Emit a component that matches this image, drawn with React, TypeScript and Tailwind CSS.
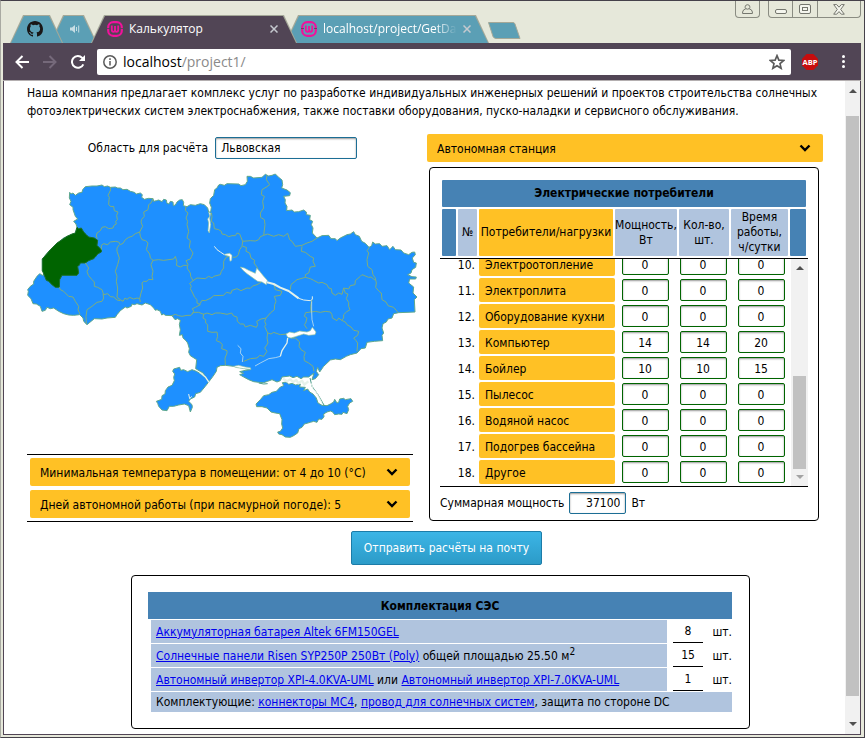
import { useState } from "react";
import type { ReactNode } from "react";

const REGION_BORDERS = [
  "270,188 271,195 268,202 263,212 267,218 266,225 265,240 272,246 280,245 282,258 293,262 289,272 291,285 286,290 288,298 280,303 278,310 265,312 255,306 245,308 240,318 230,325 228,334 231,342",
  "398,222 392,235 385,240 383,255 370,262 372,275 364,284 362,292 367,305 358,322 345,327 335,335 325,338 315,345 308,356 300,360 295,352 285,350 270,352 262,360 250,357 243,362 243,375",
  "297,360 290,370 290,380 297,400 292,420 285,440 290,455 288,470 292,490 290,518 300,525 308,530 314,520 320,524 328,518 340,523 350,520 358,522 360,532",
  "358,322 360,335 365,345 376,348 383,355 378,375 388,388 390,400 398,407 415,405 430,407 460,403 465,395 470,412 468,422 480,427 490,422 500,422",
  "398,407 392,420 398,440 395,455 398,465 385,464 380,470 370,470 365,475 367,490 362,505 358,522",
  "497,246 495,258 503,265 497,280 502,290 500,300 505,320 500,340 510,348 507,368 518,385 514,395 510,403 497,408 503,420 500,430 510,445 511,455 518,468",
  "195,415 205,430 200,440 204,452 215,465 222,472 222,485 232,488 245,495 250,510 262,507 270,516 280,517 290,526 300,528",
  "248,508 250,520 245,530 230,533 215,545 200,555 197,575 198,597",
  "117,488 120,495 130,500 145,515 158,517 165,530 175,545 173,556 179,568",
  "518,468 530,460 555,462 565,455 575,460 580,455 600,450 603,440 610,430 610,410 617,398 627,394",
  "518,468 508,476 513,485 510,492 517,505 523,518 530,525 530,535 540,540 525,548 516,552 520,560 515,568",
  "537,540 545,527 555,528 572,520 580,513 610,512 618,503 632,506 635,497 650,492 662,498 680,490 690,491 697,484 710,480 722,473",
  "455,573 465,569 475,573 485,575 500,572 512,572 520,563 535,563 550,569 560,565 575,570 585,565 600,565 620,569 634,565 640,574 650,577 651,590 660,598 670,598 675,607 690,602 708,608 712,600 709,590 722,583 737,580",
  "550,567 548,580 556,585 556,595 562,600 562,620 575,623 590,622 592,635 588,648 600,653 606,660 604,672 620,678 620,685 614,700 615,720",
  "573,264 575,275 573,290 580,295 582,312 595,315 603,320 605,328 615,330 625,336 635,333 645,333 650,325 658,328 667,350 690,348 705,349 715,345 720,336 730,332",
  "740,152 738,165 748,180 740,186 725,195 723,210 732,215 727,230 730,250 720,265 721,278 732,285 734,300 730,332",
  "730,332 742,328 760,335 775,330 790,335 802,326 808,345 815,350 825,365 845,362 860,355 875,350 890,340",
  "845,365 843,380 855,383 870,395 880,400 878,410 885,425 870,427 865,445 855,450 855,458 830,465 812,480 810,495",
  "667,350 665,365 658,375 654,390 648,397 638,398",
  "667,365 678,368 677,380 688,385 692,400 703,407 701,415 712,430 714,445",
  "855,458 870,462 880,467 895,475 905,473 920,480 925,490 933,492 935,505 945,512 955,505 965,509 970,490 985,493 990,483 1004,480 1005,468 1020,455 1025,450 1045,458 1052,457 1065,467",
  "1047,368 1040,378 1045,385 1040,405 1042,425 1055,435 1058,450 1065,460 1068,475 1066,488 1076,500 1083,505 1085,525 1097,532 1103,543 1120,548 1133,563",
  "970,490 975,505 983,508 978,522 985,533 985,545 989,555 978,562 970,570 970,580 964,587 975,592 980,600 992,607 1000,617 1015,620 1012,632 1000,640 1007,648 1012,655 1010,680",
  "872,562 885,560 900,563 915,560 930,562 935,570 936,580 950,588 955,580 964,587",
  "760,475 765,495 785,500 780,512 762,515 767,530 763,540 762,555 750,565 737,580 733,590 737,600 733,605 742,625",
  "742,625 740,640 743,655 733,670 740,680 730,695 718,692 710,700 690,702 670,710",
  "742,625 752,628 760,623 780,630 800,628",
  "875,525 871,545 872,562 856,564 852,575 860,580 856,595 852,600 860,612",
  "812,640 825,640 838,652 836,665 842,675 855,683 851,695 852,708 865,715 878,725 881,740",
];

const MAINLAND =
  "148,203 152,208 158,205 165,212 175,205 185,203 187,195 195,186 215,184 230,184 245,181 252,186 262,184 270,188 285,187 292,190 300,190 308,195 320,194 330,200 342,203 348,208 360,205 366,210 364,218 372,224 385,221 398,222 400,230 408,228 415,226 425,231 430,224 438,226 440,236 446,238 450,230 458,232 459,243 465,241 470,232 478,226 486,225 490,233 489,243 500,246 510,240 525,242 540,237 552,240 562,250 565,262 571,262 573,248 568,235 570,222 580,212 583,195 590,190 595,181 600,179 612,182 620,177 655,178 662,183 675,180 681,170 680,155 690,155 700,160 725,158 735,149 745,154 755,152 765,148 775,158 785,166 787,180 784,190 800,196 810,204 808,213 790,215 795,225 794,235 800,245 799,258 815,256 822,262 835,261 850,256 858,262 858,270 870,272 868,285 877,290 873,300 878,310 876,325 890,340 905,333 925,332 932,342 945,342 950,348 960,340 980,330 990,328 1000,321 1005,330 1017,335 1024,350 1035,356 1046,368 1054,363 1057,352 1065,358 1078,357 1085,365 1100,363 1108,375 1118,365 1125,375 1142,376 1150,385 1165,390 1175,383 1183,382 1185,390 1176,400 1180,413 1188,415 1186,428 1175,435 1172,445 1162,450 1175,456 1188,457 1186,463 1168,463 1165,475 1180,487 1178,505 1190,517 1182,525 1184,562 1135,564 1120,567 1115,580 1103,583 1098,592 1088,597 1085,610 1090,625 1085,632 1087,648 1062,650 1040,653 1035,670 1022,672 1010,685 990,690 978,695 960,705 945,703 930,706 910,725 898,742 892,728 888,740 895,750 885,762 875,765 881,745 865,757 850,757 842,762 830,755 818,759 808,754 785,757 780,768 770,772 755,765 742,770 730,774 715,773 700,771 685,765 670,757 658,750 670,746 658,741 675,737 690,735 640,725 632,724 615,722 600,723 590,728 588,740 578,755 565,772 555,785 540,803 526,807 523,817 510,823 505,830 515,840 516,848 510,862 505,843 492,838 475,841 460,845 447,845 440,858 425,856 415,845 412,836 408,830 424,824 425,813 434,808 435,798 443,787 455,782 462,768 460,758 463,748 457,740 460,733 478,728 481,737 490,735 502,741 515,735 528,740 545,750 560,763 564,770 548,745 526,732 529,705 510,693 505,683 507,672 502,655 497,648 488,640 486,630 477,632 480,615 477,600 480,587 472,582 464,585 455,573 435,572 430,568 424,571 420,560 410,555 405,557 400,550 390,540 375,535 365,541 350,537 342,540 335,538 333,545 320,550 315,547 300,558 290,570 285,578 260,580 245,583 222,582 200,600 190,590 188,580 178,570 160,572 145,571 130,567 115,560 100,550 90,552 80,548 75,557 65,560 60,545 48,538 38,537 32,522 22,512 24,500 22,495 30,485 40,478 40,470 50,455 58,447 68,453 72,440 66,438 66,403 90,375 130,340 165,325 170,308 167,298 160,290 172,283 165,275 158,255 158,248 148,240 152,230 147,220";

const CRIMEA =
  "790,783 780,787 768,800 755,803 745,810 730,813 720,825 707,838 709,846 725,846 740,850 752,862 765,865 778,867 785,885 784,898 787,910 780,920 772,922 775,928 785,930 795,937 810,938 820,933 832,925 836,912 845,908 852,898 870,893 880,890 890,893 895,883 905,884 911,876 910,868 920,862 930,859 937,862 943,870 955,868 965,869 968,863 980,867 985,855 982,845 988,835 997,830 992,822 975,825 970,821 958,823 955,833 950,835 943,824 940,832 930,838 920,843 905,842 893,835 888,820 878,808 868,802 862,793 850,798 855,788 838,787 840,778 826,781 815,776 805,779 798,772 786,774";

function UkraineMap() {
  return (
    <svg viewBox="20 139 1176 804" className="mt-3 w-[calc(100%+6px)]" role="img" aria-label="Карта областей">
      <g fill="#1e90ff" stroke="#5fa88c" strokeWidth="3" strokeLinejoin="round">
        <polygon points={MAINLAND} />
        <polygon points={CRIMEA} />
        <polygon
          fill="#006400"
          stroke="#1d6f2c"
          points="170,308 175,312 183,310 190,322 198,330 205,337 222,340 232,347 230,362 243,375 243,382 232,388 225,397 220,402 205,408 195,415 180,415 177,422 172,425 175,445 170,452 125,452 118,465 117,488 105,488 95,480 85,470 78,467 70,447 66,438 66,403 90,375 110,355 140,335 155,328 165,325"
        />
      </g>
      <g fill="none" stroke="#7fae7c" strokeWidth="3" strokeLinejoin="round">
        {REGION_BORDERS.map((points) => (
          <polyline key={points} points={points} />
        ))}
        <polyline points="869,760 875,785 893,810 912,843" stroke="#4a9a8a" />
        <polyline points="715,775 730,778 742,777" stroke="#4a9a8a" />
      </g>
      <g fill="#fff" stroke="#8fc3a0" strokeWidth="2" strokeLinejoin="round">
        <polygon points="565,262 571,266 568,280 571,300 567,325 563,318 565,295 562,283 568,275" />
        <polygon points="612,389 628,386 635,392 634,407 629,410 627,395 614,392" />
        <polygon points="660,427 672,430 685,437 705,446 709,431 718,440 730,455 741,467 738,480 725,472 712,470 695,458 680,447 668,437" />
        <polygon points="797,628 808,622 822,625 838,619 860,622 870,618 876,608 887,622 884,630 865,632 850,628 825,636 812,640 802,638" />
        <polygon points="640,725 655,722 675,727 690,729 692,734 670,732 645,728" />
      </g>
      <g fill="none" stroke="#e6f2ea" strokeWidth="4" strokeLinejoin="round">
        <polyline points="740,473 760,478 780,489 805,499 835,521" strokeWidth="6" />
        <polyline points="835,521 850,526 870,528 876,524 876,515" strokeWidth="3" />
        <polyline points="582,365 590,375 600,382 612,390" strokeWidth="3" />
        <polyline points="874,530 874,560 875,585 880,605" strokeWidth="2" />
        <polyline points="802,640 800,655 785,678 780,695" />
        <polyline points="780,695 765,699 745,702 720,715 704,724" strokeWidth="2" />
        <polyline points="652,662 662,672 660,685 668,695 666,712" strokeWidth="2" />
        <polyline points="538,743 556,758 566,773" />
        <polyline points="788,762 800,770 810,764 818,772 828,766 834,776 845,768 852,780 864,770" strokeWidth="7" />
        <polyline points="872,775 878,792 890,806 905,835" strokeWidth="3" />
        <polyline points="505,808 508,822 514,815" strokeWidth="3" />
      </g>
    </svg>
  );
}

function Chevron() {
  return (
    <svg viewBox="0 0 12 8" className="pointer-events-none absolute right-3 h-2 w-3" fill="none" stroke="#000" strokeWidth="2.4">
      <path d="M1.5 1.5 6 6l4.5-4.5" />
    </svg>
  );
}

function Dropdown({ label, value }: { label: string; value: string }) {
  return (
    <label className="relative flex items-center">
      <select aria-label={label} className="h-7 w-full appearance-none rounded-xs bg-[#ffc125] pt-px pr-8 pl-[10px] text-black outline-none">
        <option>{value}</option>
      </select>
      <Chevron />
    </label>
  );
}

function TabShape({ fill }: { fill: string }) {
  return (
    <svg viewBox="0 0 100 28" preserveAspectRatio="none" className="absolute inset-0 -z-10 h-full w-full" aria-hidden="true">
      <rect width="100" height="28" fill={fill} />
    </svg>
  );
}

function Tab({ className, active, children }: { className: string; active?: boolean; children: ReactNode }) {
  return (
    <div
      className={`relative isolate h-7 bg-[#a4a898] [clip-path:polygon(13px_0,calc(100%-13px)_0,100%_100%,0_100%)] ${className}`}
    >
      <div className="absolute inset-x-px top-px bottom-0 -z-10 [clip-path:polygon(13px_0,calc(100%-13px)_0,100%_100%,0_100%)]">
        <TabShape fill={active ? "#514555" : "#5b9fb5"} />
      </div>
      <div className="flex h-full items-center">{children}</div>
    </div>
  );
}

function WampIcon() {
  return (
    <svg viewBox="0 0 16 16" className="h-4 w-4 shrink-0" fill="none" stroke="#f0129b" aria-hidden="true">
      <rect x="1.2" y="1.2" width="13.6" height="13.6" rx="5" strokeWidth="2.2" />
      <path d="M0 7.500h3M13 7.500h3" stroke="#514555" strokeWidth=".8" />
      <path d="M4.8 4.500v4.300q0 2 1.600 2T8 8.800V5m0 3.800q0 2 1.600 2t1.600-2V4.500" strokeWidth="1.800" />
    </svg>
  );
}

function CloseIcon() {
  return (
    <svg viewBox="0 0 8 8" className="h-2 w-2" stroke="#c5c9cf" strokeWidth="1.5">
      <path d="m.5.5 7 7m0-7-7 7" />
    </svg>
  );
}

function TitleBar() {
  return (
    <div className="flex h-[42px] items-start justify-between">
      <div className="flex items-end pt-[14px] pl-[7px] font-['Open_Sans','Noto_Sans',sans-serif] text-[12px] text-white">
        <Tab className="z-10 w-[53px] pl-[17px]">
          <svg viewBox="0 0 16 16" className="h-4 w-4" fill="#191717" aria-label="GitHub">
            <path d="M8 0C3.58 0 0 3.58 0 8c0 3.54 2.29 6.53 5.47 7.59.4.07.55-.17.55-.38 0-.19-.01-.82-.01-1.49-2.01.37-2.53-.49-2.69-.94-.09-.23-.48-.94-.82-1.13-.28-.15-.68-.52-.01-.53.63-.01 1.08.58 1.23.82.72 1.21 1.87.87 2.33.66.07-.52.28-.87.51-1.07-1.78-.2-3.64-.89-3.64-3.95 0-.87.31-1.59.82-2.15-.08-.2-.36-1.02.08-2.12 0 0 .67-.21 2.2.82a7.6 7.6 0 0 1 4 0c1.53-1.04 2.2-.82 2.2-.82.44 1.1.16 1.92.08 2.12.51.56.82 1.27.82 2.15 0 3.07-1.87 3.75-3.65 3.95.29.25.54.73.54 1.48 0 1.07-.01 1.93-.01 2.2 0 .21.15.46.55.38A8.01 8.01 0 0 0 16 8c0-4.42-3.58-8-8-8" />
          </svg>
        </Tab>
        <Tab className="-ml-[13px] w-[47px] pl-5">
          <svg viewBox="0 0 10 10" className="h-[10px] w-[10px]" fill="#c7dde4" stroke="#c7dde4" aria-label="Звук">
            <path d="M0 3.500h2L5 1v8L2 6.500H0z" stroke="none" />
            <path d="M6.500 3v4M8.700 1.500v7" fill="none" />
          </svg>
        </Tab>
        <Tab active className="z-20 -ml-[6px] w-[206px] pl-4">
          <WampIcon />
          <span className="ml-[6px] flex-1">Калькулятор</span>
          <button aria-label="Закрыть вкладку" className="mr-[19px]"><CloseIcon /></button>
        </Tab>
        <Tab className="-ml-3 w-[204px] pl-4">
          <WampIcon />
          <span className="ml-[6px] w-[134px] whitespace-nowrap [mask-image:linear-gradient(to_right,#000_84%,transparent)]">
            localhost/project/GetDat
          </span>
          <button aria-label="Закрыть вкладку" className="ml-[6px]"><CloseIcon /></button>
        </Tab>
        <button aria-label="Новая вкладка" className="mb-1 -ml-[2px]">
          <svg viewBox="0 0 34 17" className="h-[17px] w-[34px]" fill="#5b9fb5" stroke="#a4a898">
            <path d="M1.500 .5H26q1.500 0 2 1.500l5 14.500H9q-2 0-3-2z" />
          </svg>
        </button>
      </div>
      <div className="flex h-[17px] gap-2 text-[#74766e]">
        <button aria-label="Профиль" className="flex w-[25px] items-center justify-center rounded-b-sm border border-t-0 border-[#8a8c82]">
          <svg viewBox="0 0 11 11" className="h-[11px] w-[11px]" fill="none" stroke="currentColor">
            <path d="M5.500.7a2.300 2.300 0 0 1 1.600 4q3 .8 3.300 3.300v1.500H.6V8q.3-2.500 3.300-3.300A2.300 2.300 0 0 1 5.500.7zM3.900 4.700q1.600 1 3.200 0" />
          </svg>
        </button>
        <div className="flex divide-x divide-[#8a8c82] rounded-b-sm border border-t-0 border-[#8a8c82]">
          <button aria-label="Свернуть" className="flex w-6 items-end justify-center pb-[3px]">
            <span className="h-[5px] w-3 rounded-xs border border-current bg-[#f4f5ee]" />
          </button>
          <button aria-label="Развернуть" className="flex w-[25px] items-center justify-center">
            <span className="flex h-[10px] w-3 items-center justify-center rounded-xs border border-current bg-[#f4f5ee]">
              <span className="h-1 w-[6px] border border-current" />
            </span>
          </button>
          <button aria-label="Закрыть" className="flex w-[42px] items-center justify-center">
            <svg viewBox="0 0 12 11" className="h-[11px] w-3" fill="#f4f5ee" stroke="currentColor">
              <path d="M.7.600h3L6 3.200 8.300.600h3L7.700 5.400l3.600 4.800h-3L6 7.600l-2.300 2.600h-3l3.600-4.800z" />
            </svg>
          </button>
        </div>
      </div>
    </div>
  );
}

function Toolbar() {
  return (
    <div className="flex h-[38px] items-center border-b border-[#b4afb0] bg-[#514555] pr-4 pl-3">
      <div className="flex w-[82px] items-center gap-[14px]">
        <button aria-label="Назад">
          <svg viewBox="0 0 14 14" className="h-[14px] w-[14px]" fill="none" stroke="#fff" strokeWidth="2">
            <path d="M14 7H1.500M7.500 1 1.500 7l6 6" />
          </svg>
        </button>
        <button aria-label="Вперёд">
          <svg viewBox="0 0 14 14" className="h-[14px] w-[14px]" fill="none" stroke="#75697a" strokeWidth="2">
            <path d="M0 7h12.500M6.500 1l6 6-6 6" />
          </svg>
        </button>
        <button aria-label="Обновить">
          <svg viewBox="0 0 14 14" className="h-[14px] w-[14px]" fill="none" stroke="#fff" strokeWidth="2">
            <path d="M12.300 9.300A5.900 5.900 0 1 1 11.200 2.900L13 4.800" />
            <path d="M14 0v6H8z" fill="#fff" stroke="none" />
          </svg>
        </button>
      </div>
      <div className="flex h-[26px] flex-1 items-center rounded-xs bg-white px-[6px] font-['Open_Sans','Noto_Sans',sans-serif] text-[14px]">
        <svg viewBox="0 0 14 14" className="h-[14px] w-[14px]" fill="none" stroke="#5a5a5a" strokeWidth="1.500">
          <circle cx="7" cy="7" r="6.200" />
          <path d="M7 6v4.500M7 3.300v1.600" />
        </svg>
        <span className="ml-[6px] flex-1 text-[#8a8a8a]">
          <span className="text-black">localhost</span>/project1/
        </span>
        <svg viewBox="0 0 24 24" className="h-4 w-4" fill="none" stroke="#5a5a5a" strokeWidth="2.500">
          <path d="m12 2.500 2.800 6.700 7.200.600-5.500 4.700 1.700 7L12 17.700l-6.200 3.800 1.700-7L2 9.800l7.200-.600z" />
        </svg>
      </div>
      <svg viewBox="0 0 16 16" className="ml-[11px] h-4 w-4" role="img" aria-label="ABP">
        <path d="M4.700 0h6.600L16 4.700v6.600L11.300 16H4.700L0 11.300V4.700z" fill="#c70d0d" />
        <text x="8" y="10.800" textAnchor="middle" fontSize="7.500" fontWeight="700" fill="#fff" fontFamily="Open Sans, sans-serif">ABP</text>
      </svg>
      <button aria-label="Меню" className="ml-6 flex w-[3px] flex-col gap-[2px]">
        <span className="size-[3px] rounded-full bg-white" />
        <span className="size-[3px] rounded-full bg-white" />
        <span className="size-[3px] rounded-full bg-white" />
      </button>
    </div>
  );
}

const CONSUMERS: { n: number; name: string; power: string; count: string; hours: string }[] = [
  { n: 10, name: "Электроотопление", power: "0", count: "0", hours: "0" },
  { n: 11, name: "Электроплита", power: "0", count: "0", hours: "0" },
  { n: 12, name: "Оборудование кухни", power: "0", count: "0", hours: "0" },
  { n: 13, name: "Компьютер", power: "14", count: "14", hours: "20" },
  { n: 14, name: "Бойлер", power: "10", count: "10", hours: "15" },
  { n: 15, name: "Пылесос", power: "0", count: "0", hours: "0" },
  { n: 16, name: "Водяной насос", power: "0", count: "0", hours: "0" },
  { n: 17, name: "Подогрев бассейна", power: "0", count: "0", hours: "0" },
  { n: 18, name: "Другое", power: "0", count: "0", hours: "0" },
];

function NumberCell({ label, initial }: { label: string; initial: string }) {
  const [value, setValue] = useState(initial);
  return (
    <td className="p-0 text-center">
      <input
        aria-label={label}
        value={value}
        onChange={(e) => setValue(e.target.value)}
        className="mx-auto block h-[22px] w-[47px] rounded-xs border border-[#006400] bg-white pt-px text-center shadow-[inset_0_1px_2px_#999] outline-none"
      />
    </td>
  );
}

function ScrollArrow({ up, color }: { up?: boolean; color: string }) {
  return (
    <svg viewBox="0 0 8 4" className="h-1 w-2" fill={color} aria-hidden="true">
      <path d={up ? "M0 4 4 0l4 4z" : "M0 0l4 4 4-4z"} />
    </svg>
  );
}

function ConsumersPanel() {
  return (
    <section className="mt-[5px] mr-1 ml-[2px] rounded-sm border border-black px-[10px] pt-[10px]">
      <table className="w-full table-fixed border-separate border-spacing-[2px] text-center leading-[15px]">
        <colgroup>
          <col className="w-[14px]" />
          <col className="w-[19px]" />
          <col />
          <col className="w-[62px]" />
          <col className="w-[50px]" />
          <col className="w-[57px]" />
          <col className="w-4" />
        </colgroup>
        <thead>
          <tr>
            <th colSpan={7} className="h-[27px] rounded-[1px] bg-[#4682b4] p-0 font-bold">Электрические потребители</th>
          </tr>
          <tr className="h-[47px]">
            <td className="rounded-[1px] bg-[#4682b4] p-0" />
            <th className="rounded-[1px] bg-[#b0c4de] p-0 font-normal">№</th>
            <th className="rounded-[1px] bg-[#ffc125] p-0 font-normal whitespace-nowrap">Потребители/нагрузки</th>
            <th className="rounded-[1px] bg-[#b0c4de] p-0 font-normal">Мощность, Вт</th>
            <th className="rounded-[1px] bg-[#b0c4de] p-0 font-normal">Кол-во, шт.</th>
            <th className="rounded-[1px] bg-[#b0c4de] p-0 font-normal">Время работы, ч/сутки</th>
            <td className="rounded-[1px] bg-[#4682b4] p-0" />
          </tr>
        </thead>
      </table>
      <div className="flex h-[229px] border-y border-black">
        <div className="flex flex-1 flex-col justify-end overflow-hidden">
          <table className="w-full table-fixed border-separate border-spacing-[2px]">
            <colgroup>
              <col className="w-[35px]" />
              <col />
              <col className="w-14" />
              <col className="w-14" />
              <col className="w-14" />
            </colgroup>
            <tbody>
              {CONSUMERS.map((row) => (
                <tr key={row.n} className="h-6">
                  <td className="p-0 pt-px pr-[2px] text-right">{row.n}.</td>
                  <th scope="row" className="rounded-xs bg-[#ffc125] p-0 pt-px pl-[6px] text-left font-normal">{row.name}</th>
                  <NumberCell label={`${row.name}: мощность, Вт`} initial={row.power} />
                  <NumberCell label={`${row.name}: кол-во, шт.`} initial={row.count} />
                  <NumberCell label={`${row.name}: время работы, ч/сутки`} initial={row.hours} />
                </tr>
              ))}
            </tbody>
          </table>
        </div>
        <div className="flex w-[17px] flex-col items-center justify-between bg-[#f1f1f1] py-[7px]">
          <ScrollArrow up color="#505050" />
          <div className="mt-auto mb-[6px] h-[93px] w-[13px] bg-[#c1c1c1]" />
          <ScrollArrow color="#a3a3a3" />
        </div>
      </div>
      <div className="flex items-center gap-[5px] pt-[5px] pb-[6px]">
        <label htmlFor="total-power">Суммарная мощность</label>
        <input
          id="total-power"
          readOnly
          value="37100"
          className="h-[22px] w-[57px] rounded-xs border border-[#1c6e95] bg-white px-[5px] text-right shadow-[inset_0_1px_2px_#999] outline-none"
        />
        <span>Вт</span>
      </div>
    </section>
  );
}

function Link({ children }: { children: ReactNode }) {
  return <a href="#kit" className="text-[#0000ee] underline">{children}</a>;
}

function KitRow({ count, label, children }: { count: string; label: string; children: ReactNode }) {
  return (
    <tr className="h-[23px]">
      <td className="bg-[#b0c4de] p-0 pl-[5px]">{children}</td>
      <td className="p-0">
        <div className="flex items-center justify-between pl-[6px]">
          <input
            aria-label={label}
            readOnly
            value={count}
            className="h-[22px] w-[30px] border-b border-black text-center outline-none"
          />
          <span>шт.</span>
        </div>
      </td>
    </tr>
  );
}

function KitPanel() {
  return (
    <section id="kit" className="mx-auto mt-[10px] w-[619px] max-w-full rounded-sm border border-black px-4 pt-4 pb-[15px]">
      <h2 className="mr-px flex h-[27px] items-center justify-center bg-[#4682b4] font-bold">Комплектация СЭС</h2>
      <table className="ml-[3px] w-[581px] table-fixed border-separate border-spacing-x-0 border-spacing-y-px">
        <colgroup>
          <col />
          <col className="w-[65px]" />
        </colgroup>
        <tbody>
          <KitRow count="8" label="Количество батарей">
            <Link>Аккумуляторная батарея Altek 6FM150GEL</Link>
          </KitRow>
          <KitRow count="15" label="Количество панелей">
            <Link>Солнечные панели Risen SYP250P 250Вт (Poly)</Link> общей площадью 25.50 м<sup className="text-[10px] leading-none">2</sup>
          </KitRow>
          <KitRow count="1" label="Количество инверторов">
            <Link>Автономный инвертор XPI-4.0KVA-UML</Link> или <Link>Автономный инвертор XPI-7.0KVA-UML</Link>
          </KitRow>
          <tr className="h-5">
            <td colSpan={2} className="bg-[#b0c4de] p-0 pl-[5px]">
              Комплектующие: <Link>коннекторы MC4</Link>, <Link>провод для солнечных систем</Link>, защита по стороне DC
            </td>
          </tr>
        </tbody>
      </table>
    </section>
  );
}

function Calculator() {
  return (
    <main className="flex-1 pt-[3px] pr-[22px] pl-[23px] text-black">
      <p className="leading-[18px]">
        Наша компания предлагает комплекс услуг по разработке индивидуальных инженерных решений и проектов строительства солнечных фотоэлектрических систем электроснабжения, также поставки оборудования, пуско-наладки и сервисного обслуживания.
      </p>
      <div className="mt-[14px] grid grid-cols-[386fr_396fr] gap-[14px]">
        <div>
          <div className="flex items-center justify-center gap-[7px] pt-[3px] pl-[5px]">
            <label htmlFor="region">Область для расчёта</label>
            <input
              id="region"
              defaultValue="Львовская"
              className="h-[22px] w-[142px] rounded-xs border border-[#1c6e95] bg-white px-[5px] shadow-[inset_0_1px_2px_#999] outline-none"
            />
          </div>
          <UkraineMap />
          <div className="mt-[15px] flex flex-col gap-1 border-y border-black p-[3px]">
            <Dropdown label="Минимальная температура" value="Минимальная температура в помещении: от 4 до 10 (°C)" />
            <Dropdown label="Дней автономной работы" value="Дней автономной работы (при пасмурной погоде): 5" />
          </div>
        </div>
        <div>
          <Dropdown label="Тип станции" value="Автономная станция" />
          <ConsumersPanel />
        </div>
      </div>
      <div className="mt-[9px] flex justify-center pl-[43px]">
        <button className="h-[34px] rounded-xs border border-[#1c7ca8] bg-linear-to-b from-[#3cb5e6] to-[#2c9bc8] px-3 text-white">
          Отправить расчёты на почту
        </button>
      </div>
      <div className="pl-[31px]">
        <KitPanel />
      </div>
    </main>
  );
}

export default function App() {
  return (
    <div className="flex min-h-screen flex-col border border-[#45414a] border-l-[#a9aaa2] bg-[#e6e8da] pr-[3px] pb-[2px] pl-[2px] font-['DejaVu_Sans_Condensed','Noto_Sans',sans-serif] text-[12px] leading-[16px]">
      <TitleBar />
      <Toolbar />
      <div className="flex flex-1 border-x border-b border-[#514555] bg-white">
        <Calculator />
        <div className="flex w-[15px] flex-col items-center justify-between bg-[#f1f1f1] py-2">
          <ScrollArrow up color="#505050" />
          <div className="mt-[23px] mb-[26px] w-[13px] flex-1 bg-[#c1c1c1]" />
          <ScrollArrow color="#505050" />
        </div>
      </div>
    </div>
  );
}
